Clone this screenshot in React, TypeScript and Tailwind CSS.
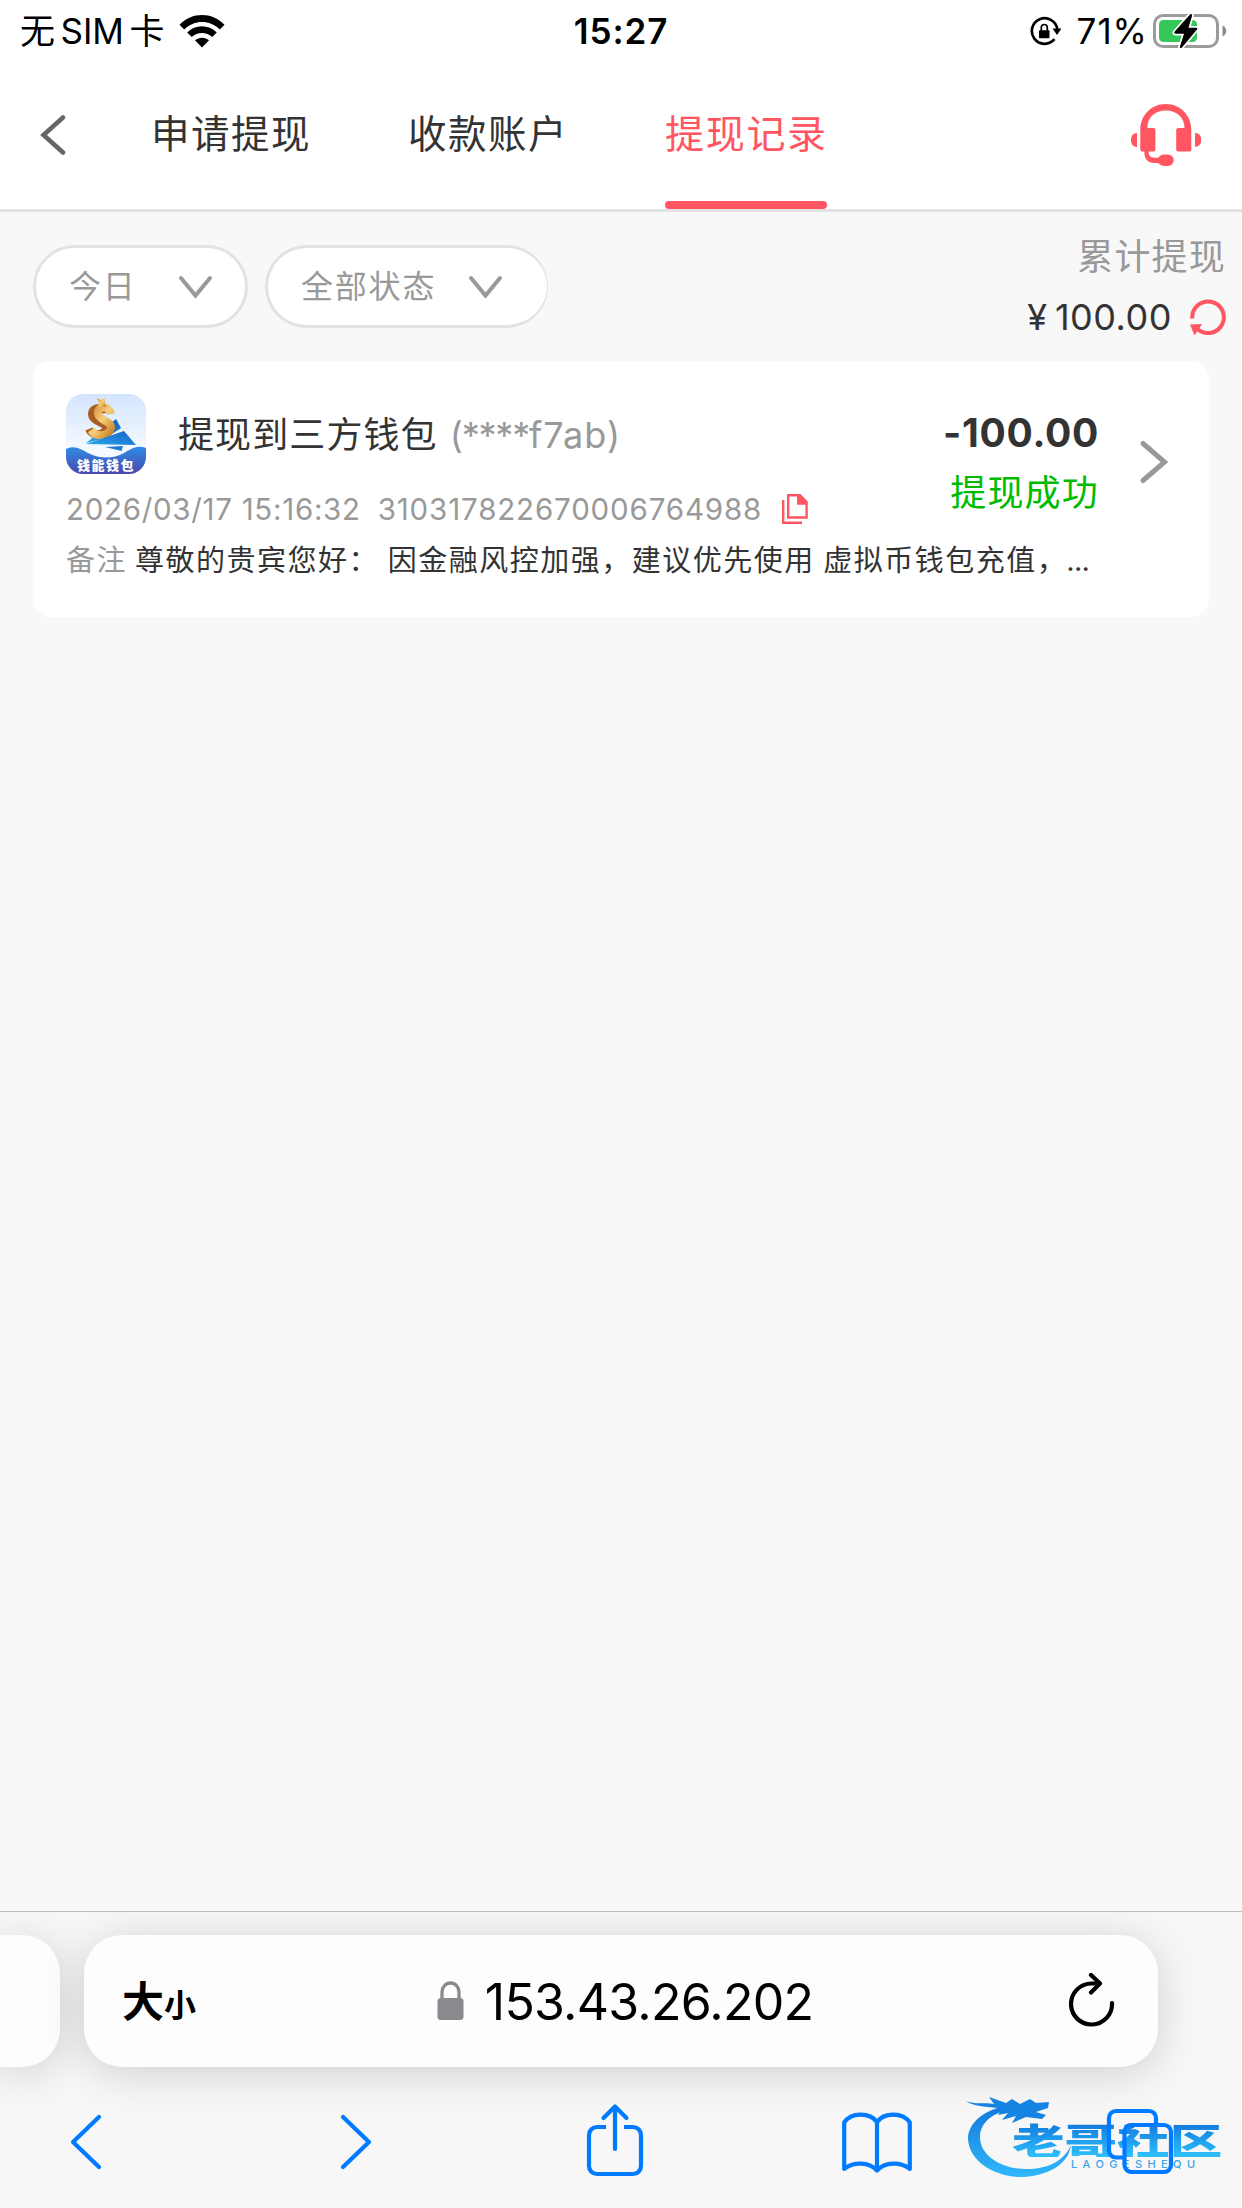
import type { ReactNode } from 'react';

const FONT = "font-['Inter','Noto_Sans_CJK_SC',sans-serif]";

interface FilterPillProps {
  label: string;
  className: string;
}

const tabs = [
  { label: '申请提现', active: false },
  { label: '收款账户', active: false },
  { label: '提现记录', active: true },
];

const record = {
  title: '提现到三方钱包',
  accountMask: '(****',
  accountTail: 'f7ab)',
  time: '2026/03/17 15:16:32',
  orderNo: '310317822670006764988',
  remark: '尊敬的贵宾您好： 因金融风控加强，建议优先使用 虚拟币钱包充值，',
  amount: '-100.00',
  status: '提现成功',
};

function WifiIcon() {
  return (
    <svg className="h-[33px] w-[46px]" viewBox="0 0 46 33">
      <path d="M0.5 9.8C13-3.2 33-3.2 45.5 9.8L40.8 14.4C31 4.4 15 4.4 5.2 14.4Z" />
      <path d="M8.2 17.4C16.4 9.2 29.6 9.2 37.8 17.4L33.2 22C27.5 16.5 18.5 16.5 12.8 22Z" />
      <path d="M16 25.2C20 21.8 26 21.8 30 25.2L23 32.5Z" />
    </svg>
  );
}

function RotationLockIcon() {
  return (
    <svg className="h-[30px] w-[32px]" viewBox="0 0 32 30">
      <path d="M24.5 23.2A12.8 12.8 0 1 1 27.3 13" fill="none" stroke="#000" strokeWidth="2.7" />
      <path d="M22.5 12.5H31.5L27 19Z" />
      <rect x="9" y="14.2" width="10.5" height="8" rx="1" />
      <path d="M11.3 15V11.5a3 3 0 0 1 6 0V15" fill="none" stroke="#000" strokeWidth="1.7" />
    </svg>
  );
}

function BatteryIcon() {
  return (
    <svg className="h-[36px] w-[74px]" viewBox="0 0 74 36">
      <rect x="1.5" y="2.5" width="63" height="31" rx="8.5" fill="none" stroke="#9b9b9b" strokeWidth="3" />
      <path d="M69.5 12.5c5 2 5 9 0 11Z" fill="#8c8c8c" />
      <rect x="6" y="7" width="38" height="22" rx="4.5" fill="#34c759" />
      <path
        d="M37 1.5 21.5 18.8c-.8.9-.2 2 .8 2H31L27 33.5c-.5 1.6 1 2.2 2 1L44 16.5c.7-.9.2-1.8-.8-1.8H35.5L39 3c.5-1.7-1-2.5-2-1.5Z"
        stroke="#fff"
        strokeWidth="3.5"
        strokeLinejoin="round"
        paintOrder="stroke"
      />
    </svg>
  );
}

function HeadsetIcon() {
  return (
    <svg className="h-[62px] w-[70px]" viewBox="0 0 70 62" fill="#ff5662">
      <path d="M9.3 26C9.3 11 20.5 0 34.8 0S60.3 11 60.3 26V45.5a2 2 0 0 1-2 2H47.2a2 2 0 0 1-2-2V26a2 2 0 0 1 2-2H53.5C53.5 13.5 45.5 6.5 34.8 6.5S16.3 13.5 16.3 24H22.4a2 2 0 0 1 2 2V45.5a2 2 0 0 1-2 2H17.6C17.6 52 19.5 53.7 23.5 53.7H27.3C29 51.5 31 50.5 33 50.5H37a5.7 5.7 0 0 1 0 11.5H33C31 62 29 61 27.3 59H23.5C16.5 59 13.3 55 13.3 47.5H11.3a2 2 0 0 1-2-2Z" />
      <path d="M6 29V43C2 43 0 40 0 36S2 29 6 29Z" />
      <path d="M64 29V43C68 43 70.3 40 70.3 36S68 29 64 29Z" />
    </svg>
  );
}

function RefreshIcon() {
  return (
    <svg className="h-[36px] w-[37px]" viewBox="0 0 37 36">
      <path d="M2.3 19.5A15.8 15.8 0 1 1 7.5 30" fill="none" stroke="#ff5662" strokeWidth="4" />
      <path d="M0 25.5 12 25 4.5 36.5Z" fill="#ff5662" />
    </svg>
  );
}

function WalletLogo() {
  return (
    <div className="relative h-[80px] w-[80px] shrink-0 overflow-hidden rounded-[17px]">
      <svg className="h-full w-full" viewBox="0 0 80 80">
        <defs>
          <linearGradient id="sky" x1="0" y1="0" x2="0" y2="1">
            <stop offset="0" stopColor="#d3e5fd" />
            <stop offset="0.7" stopColor="#f5faff" />
          </linearGradient>
          <linearGradient id="wave" x1="0" y1="0" x2="0" y2="1">
            <stop offset="0" stopColor="#2f8be6" />
            <stop offset="1" stopColor="#4a49ac" />
          </linearGradient>
          <linearGradient id="plane" x1="0" y1="1" x2="1" y2="0">
            <stop offset="0" stopColor="#2aa8ee" />
            <stop offset="1" stopColor="#1560c4" />
          </linearGradient>
          <linearGradient id="gold" x1="0" y1="0" x2="1" y2="1">
            <stop offset="0" stopColor="#d58a35" />
            <stop offset="0.5" stopColor="#f6cf7c" />
            <stop offset="1" stopColor="#c98222" />
          </linearGradient>
        </defs>
        <rect width="80" height="80" fill="url(#sky)" />
        <path d="M20 49 50 25 55 34 40 44Z" fill="url(#plane)" />
        <path
          d="M40 19C39 12 26 12 26 20S40 28 40 34 27 44 23 35"
          fill="none"
          stroke="#a85e23"
          strokeWidth="8"
        />
        <path
          d="M45 20C43 11 31 12 32 19.500S46 27 45 34 31 45 25 36"
          fill="none"
          stroke="url(#gold)"
          strokeWidth="8"
        />
        <path d="M32 13 33 9 31 4 35 6 39 4 39 8 40 13Z" fill="url(#gold)" />
        <path d="M20 50 58 37 70 51Z" fill="url(#plane)" />
        <path d="M39 53 57 52 55.5 57Z" fill="#1b7bd6" />
        <path d="M0 55C8 51 14 54 22 59C34 65 47 65 58 59C66 54 72 51 80 54V80H0Z" fill="url(#wave)" />
      </svg>
      <span className="absolute bottom-0 left-0 w-full text-center font-['Noto_Sans_CJK_SC',sans-serif] text-[13px] leading-[18px] font-black tracking-[1.5px] text-white">
        钱能钱包
      </span>
    </div>
  );
}

function CopyIcon() {
  return (
    <svg className="h-[30px] w-[26px]" viewBox="0 0 26 30" fill="none" stroke="#ff5662" strokeWidth="2.4">
      <path d="M1.2 6V28.7H20" />
      <path d="M6.2 1.3H18L24.6 8V23.5H6.2Z" />
      <path d="M15 1H18.5L25 8V10.7H15Z" fill="#ff5662" stroke="none" />
    </svg>
  );
}

function FilterPill({ label, className }: FilterPillProps) {
  return (
    <button
      className={`flex h-[83px] items-center justify-between rounded-full border-3 border-[#e2e2e2] bg-white pl-[33px] ${className}`}
    >
      <span className="text-[32px] leading-[40px] tracking-[1.8px] text-[#999]">{label}</span>
      <svg className="h-[24px] w-[35px]" viewBox="0 0 35 24">
        <path d="M3 3 17.5 20.5 32 3" fill="none" stroke="#999" strokeWidth="4" strokeLinecap="round" />
      </svg>
    </button>
  );
}

function StatusBar() {
  return (
    <div className="grid h-[62px] grid-cols-[1fr_auto_1fr] items-center text-black">
      <div className="flex items-center gap-[14px] pl-[20px]">
        <span className="text-[35px] leading-[62px]">
          无<span className="mx-[5.5px]">SIM</span>卡
        </span>
        <WifiIcon />
      </div>
      <span className="text-[35px] font-semibold tracking-[0.9px]">15:27</span>
      <div className="flex items-center justify-end pr-[15px]">
        <RotationLockIcon />
        <span className="mr-[5px] ml-[15px] text-[35px] tracking-[1px]">71%</span>
        <BatteryIcon />
      </div>
    </div>
  );
}

function TopNav() {
  return (
    <div className="flex h-[150px] items-stretch border-b-3 border-[#e2e2e2] pr-[41px] pl-[40px]">
      <svg className="mt-[52px] h-[42px] w-[26px]" viewBox="0 0 26 42">
        <path d="M23 3.5 3.500 21 23 38.500" fill="none" stroke="#666" strokeWidth="4.5" strokeLinecap="round" />
      </svg>
      <div className="ml-[85px] flex gap-[95px]">
        {tabs.map((tab) => (
          <div
            key={tab.label}
            className={
              tab.active
                ? 'flex w-[162px] flex-col justify-between text-[39px] tracking-[1.7px] text-[#ff5662]'
                : 'w-[162px] text-[38.5px] tracking-[1.5px] text-[#333]'
            }
          >
            <span className="mt-[44px] block leading-[56px] whitespace-nowrap">{tab.label}</span>
            {tab.active && <div className="h-[8px] rounded-[4px] bg-[#ff5662]" />}
          </div>
        ))}
      </div>
      <div className="mt-[42px] ml-auto">
        <HeadsetIcon />
      </div>
    </div>
  );
}

function FilterRow() {
  return (
    <div className="flex h-[149px] items-start justify-between pt-[33px] pr-[15px] pl-[33px]">
      <div className="flex gap-[17px]">
        <FilterPill label="今日" className="w-[215px] pr-[32px]" />
        <FilterPill label="全部状态" className="w-[283px] border-r-1 pr-[44px]" />
      </div>
      <div className="-mt-[13px] flex flex-col items-end">
        <span className="mr-[1px] text-[36px] leading-[50px] tracking-[1.2px] text-[#999]">累计提现</span>
        <div className="mt-[10px] flex h-[50px] items-center text-[#333]">
          <span className="mr-[8px] text-[36px]">¥</span>
          <span className="text-[36px] tracking-[0.5px]">100.00</span>
          <span className="ml-[18px]">
            <RefreshIcon />
          </span>
        </div>
      </div>
    </div>
  );
}

function RecordCard() {
  return (
    <div className="mr-[33px] ml-[33px] flex h-[256px] flex-col rounded-[18px] bg-white pl-[33px]">
      <div className="flex">
        <div className="flex-1 pt-[33px]">
          <div className="flex h-[80px] items-center">
            <WalletLogo />
            <span className="mt-[2px] ml-[32px] text-[36px] tracking-[1.1px] text-[#333]">{record.title}</span>
            <span className="mt-[2px] ml-[12px] text-[36px] tracking-[1px] text-[#999]">
              <span className="tracking-[-1.2px]">{record.accountMask}</span>
              {record.accountTail}
            </span>
          </div>
          <div className="mt-[15px] flex h-[40px] items-center text-[29.5px] tracking-[0.7px] text-[#999]">
            <span>{record.time}</span>
            <span className="ml-[17px] tracking-[0.85px]">{record.orderNo}</span>
            <span className="ml-[20px]">
              <CopyIcon />
            </span>
          </div>
        </div>
        <div className="flex w-[160px] flex-col items-end pt-[47px]">
          <span className="text-[39px] leading-[50px] font-bold tracking-[0.7px] text-[#333]">{record.amount}</span>
          <span className="mt-[10px] text-[36px] leading-[50px] tracking-[1.2px] text-[#0b0]">{record.status}</span>
        </div>
        <svg className="mt-[78px] mr-[40px] ml-[40px] h-[46px] w-[30px]" viewBox="0 0 30 46">
          <path d="M4 4.5 25.5 23 4 41.5" fill="none" stroke="#999" strokeWidth="5" strokeLinecap="round" />
        </svg>
      </div>
      <div className="mt-[2px] flex items-center text-[29px] leading-[60px] tracking-[1.5px] whitespace-nowrap">
        <span className="text-[#999]">备注</span>
        <span className="ml-[8px] [word-spacing:-1px] text-[#333]">
          {record.remark}
          <span className="-ml-[1px] tracking-[-0.8px]">...</span>
        </span>
      </div>
    </div>
  );
}

function AddressBar() {
  return (
    <div className="flex h-[132px] gap-[24px]">
      <div className="w-[60px] rounded-r-[38px] bg-[#fdfdfd] shadow-[0_6px_44px_rgba(0,0,0,0.16)]" />
      <div className="flex w-[1074px] items-center rounded-[38px] bg-[#fdfdfd] pr-[43px] pl-[38px] shadow-[0_6px_44px_rgba(0,0,0,0.16)]">
        <span className="mt-[2px] text-[42px] leading-none font-bold">
          大<span className="text-[32px]">小</span>
        </span>
        <div className="flex flex-1 items-center justify-center pr-[15px]">
          <svg className="h-[40px] w-[27px]" viewBox="0 0 27 40">
            <rect x="0.5" y="17" width="26" height="22" rx="3.5" fill="#8a8a8e" />
            <path d="M5 18V11a8.5 9 0 0 1 17 0V18" fill="none" stroke="#8a8a8e" strokeWidth="3.3" />
          </svg>
          <span className="mt-[2px] ml-[21px] text-[50px] tracking-[-0.75px]">153.43.26.202</span>
        </div>
        <svg className="mb-[2px] h-[54px] w-[46px]" viewBox="0 0 46 54" fill="none" stroke="#000" strokeWidth="4.2">
          <path d="M43 30A20.5 20.5 0 1 1 22.5 10.5H30" strokeLinecap="round" />
          <path d="M22 2 31 10.5 22 19.5" strokeLinecap="round" strokeLinejoin="round" />
        </svg>
      </div>
    </div>
  );
}

function ToolIcon({ className, viewBox, children }: { className: string; viewBox: string; children: ReactNode }) {
  return (
    <svg
      className={className}
      viewBox={viewBox}
      fill="none"
      stroke="#007aff"
      strokeWidth="4.2"
      strokeLinecap="round"
      strokeLinejoin="round"
    >
      {children}
    </svg>
  );
}

function CommunityMark() {
  return (
    <div className="absolute top-[24px] left-[964px] h-[90px] w-[262px]">
      <svg className="absolute inset-0 h-full w-full" viewBox="0 0 262 90">
        <defs>
          <linearGradient id="ring" x1="0" y1="0" x2="0" y2="1">
            <stop offset="0" stopColor="#1478dc" />
            <stop offset="1" stopColor="#2fb8fb" />
          </linearGradient>
        </defs>
        <path
          d="M46 14C20 18 4 32 4 48C5 70 30 86 58 86C82 85 104 75 107 54C100 70 84 78 62 78C38 78 16 65 16 46C16 30 32 20 50 18Z"
          fill="url(#ring)"
        />
        <path
          d="M2 10C14 14 22 11 30 13L25 6 42 12 48 8 56 13 66 8 72 12 85 11 84 17 72 21 82 24 78 28 62 26 48 32 52 25 38 29 44 22 34 24 38 18C26 15 12 17 2 10Z"
          fill="#1583e2"
        />
      </svg>
      <div className="absolute top-[31px] left-[48px] origin-left scale-x-[1.46] bg-gradient-to-b from-[#1478dc] to-[#2fc0fb] bg-clip-text font-['Noto_Sans_CJK_SC',sans-serif] text-[36px] leading-[35px] font-black whitespace-nowrap text-transparent">
        老哥社区
      </div>
      <div className="absolute top-[67px] left-[107px] text-[11px] leading-[12px] font-medium tracking-[5.4px] text-[#3fa3e6]">
        LAOGESHEQU
      </div>
    </div>
  );
}

function BrowserToolbar() {
  return (
    <div className="relative flex h-[141px] pl-[69px]">
      <CommunityMark />
      <ToolIcon className="mt-[46px] h-[58px] w-[34px]" viewBox="0 0 34 58">
        <path d="M30 4 4 29 30 54" />
      </ToolIcon>
      <ToolIcon className="mt-[46px] ml-[236px] h-[58px] w-[34px]" viewBox="0 0 34 58">
        <path d="M4 4 30 29 4 54" />
      </ToolIcon>
      <ToolIcon className="mt-[35px] ml-[213px] h-[76px] w-[58px]" viewBox="0 0 58 76">
        <path d="M20 25H11A8 8 0 0 0 3 33V64A8 8 0 0 0 11 72H47A8 8 0 0 0 55 64V33A8 8 0 0 0 47 25H38" strokeLinecap="butt" />
        <path d="M29 47V5M17.5 16 29 4.5 40.5 16" />
      </ToolIcon>
      <ToolIcon className="mt-[44px] ml-[197px] h-[64px] w-[72px]" viewBox="0 0 72 64">
        <path d="M36 11C29 1 10 1 3.2 11.5V58C12 50.5 28 50.5 36 59.5C44 50.5 60 50.5 68.8 58V11.5C62 1 43 1 36 11V59" />
      </ToolIcon>
      <ToolIcon className="relative mt-[41px] ml-[193px] h-[68px] w-[68px]" viewBox="0 0 68 68">
        <path d="M16 49.5H10A7 7 0 0 1 3 42.5V10A7 7 0 0 1 10 3H43A7 7 0 0 1 50 10V15" />
        <rect x="18.5" y="17" width="46.5" height="47" rx="7" />
      </ToolIcon>
    </div>
  );
}

export default function App() {
  return (
    <div className={`flex h-[2208px] w-[1242px] flex-col overflow-hidden bg-[#f8f8f8] ${FONT}`}>
      <div className="bg-white">
        <StatusBar />
        <TopNav />
      </div>
      <FilterRow />
      <RecordCard />
      <div className="mt-auto overflow-hidden border-t border-[#b9b9b9] bg-[#f7f7f7] pt-[23px]">
        <AddressBar />
        <BrowserToolbar />
      </div>
    </div>
  );
}
